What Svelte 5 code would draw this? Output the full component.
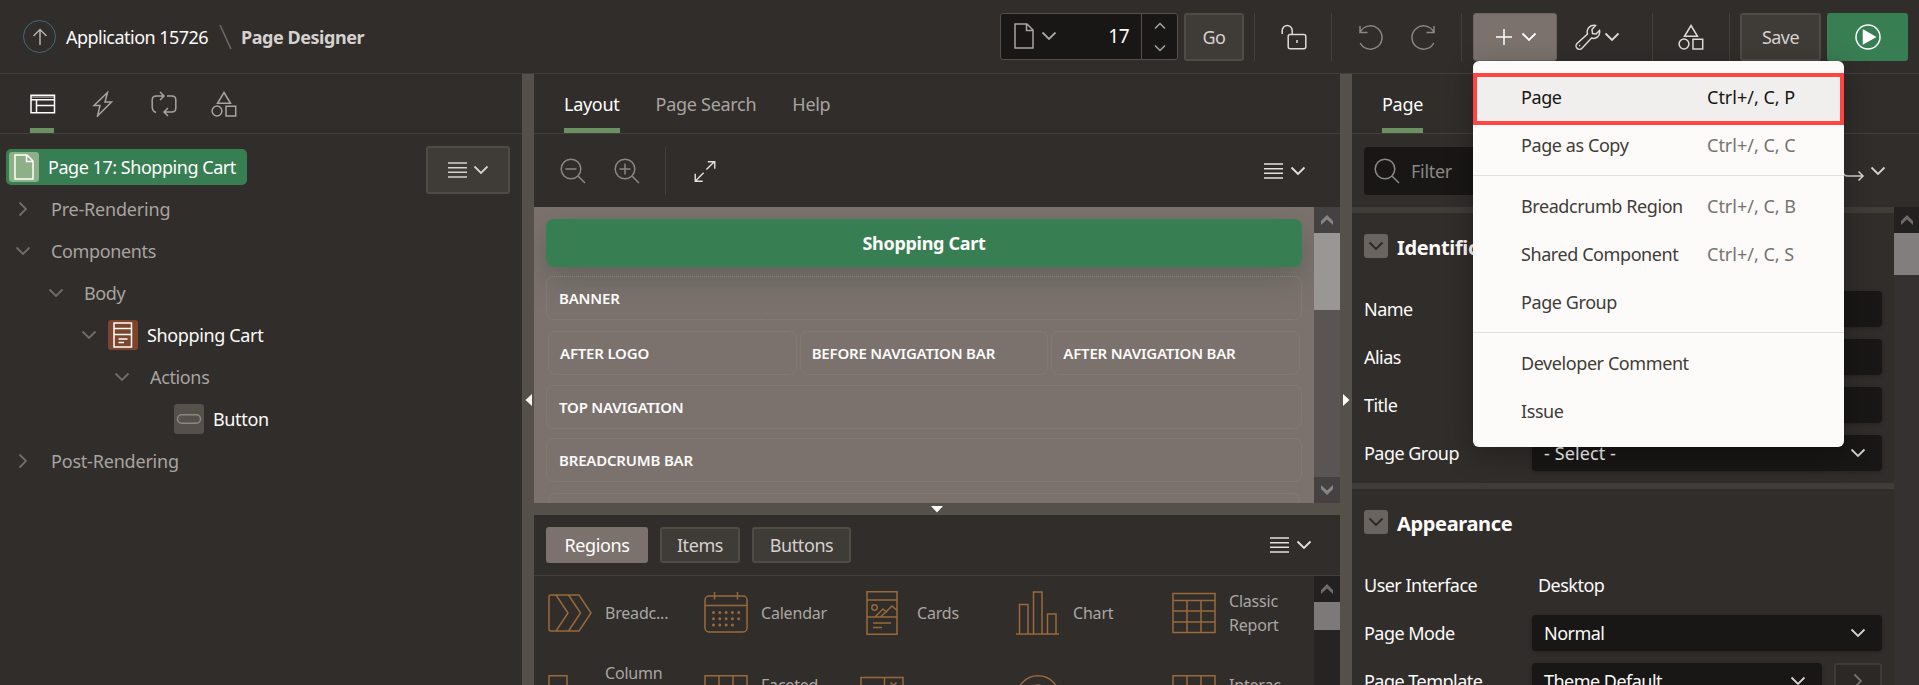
<script>
  const tree = [
    { label: 'Pre-Rendering', pad: 15, open: false, wide: true },
    { label: 'Components', pad: 15, open: true },
    { label: 'Body', pad: 48, open: true },
    { label: 'Shopping Cart', pad: 81, open: true, icon: 'region' },
    { label: 'Actions', pad: 114, open: true },
    { label: 'Button', pad: 147, icon: 'button' },
    { label: 'Post-Rendering', pad: 15, open: false, wide: true }
  ];
  const gallery = [
    ['Breadc...', 'crumb'], ['Calendar', 'calendar'], ['Cards', 'cards'], ['Chart', 'chart'], ['Classic Report', 'report'],
    ['Column Toggle Report', 'column'], ['Faceted Search', 'grid'], ['Form', 'form'], ['Help Text', 'help'], ['Interac… Grid', 'grid']
  ];
  const menu = [
    [['Page', 'Ctrl+/, C, P'], ['Page as Copy', 'Ctrl+/, C, C']],
    [['Breadcrumb Region', 'Ctrl+/, C, B'], ['Shared Component', 'Ctrl+/, C, S'], ['Page Group', '']],
    [['Developer Comment', ''], ['Issue', '']]
  ];
</script>

{#snippet chev(dir = 'open')}
  <svg class="chev {dir}" width="16" height="16" viewBox="0 0 16 16"><path d="M1.5 4.5 8 11l6.5-6.5" /></svg>
{/snippet}

{#snippet icon(name)}
  {#if name === 'lines'}
    <svg class="ic" width="19" height="18" viewBox="0 0 19 18"><path d="M0 2h19M0 6.7h19M0 11.3h19M0 16h19" /></svg>
  {:else if name === 'file'}
    <svg class="ic" width="20" height="26" viewBox="0 0 20 26"><path d="M1 1h12l6 6v18H1zM12.5 1v6.5H19" /></svg>
  {:else}
    <svg class="ic" width="26" height="26" viewBox="0 0 26 26">
      {#if name === 'tree'}
        <path d="M1 4.2h23.5v17.6H1zM1 8.7h23.5M6.5 9v12.5M6.5 14.5h18" /><path d="M1 6h23" class="faint" />
      {:else if name === 'bolt'}
        <path d="M16.5 1.5 3 14.500h6l-2.500 10.500L20.500 11h-6.500z" />
      {:else if name === 'sync'}
        <path d="M5 21.5Q1.2 20 1.2 16V9q0-4 4-4H12M9 1l4 4-4 4M16 5h4.8q4 0 4 4v8q0 4-4 4H14M17 25l-4-4 4-4" />
      {:else if name === 'shapes'}
        <path d="m13 1.5 6.5 10.8h-13zM15 15.3h9.7V25H15z" /><circle cx="6" cy="20" r="4.9" />
      {:else if name === 'lock'}
        <path d="M1.2 10V6.5a5 5 0 0 1 10 0V10" /><rect x="7.2" y="10.5" width="17.6" height="14.3" rx="2" /><path d="M16 16v3" />
      {:else if name === 'undo' || name === 'redo'}
        <g class={name}><path d="M2 2v6.500h7.500M2.200 8A11.600 11.600 0 1 1 2.200 19" /></g>
      {:else if name === 'wrench'}
        <path d="M2 19.5 12.5 10C11 5 15 .5 20.5 1.5L17 5.5l.5 4 3.5.5 3.5-3.5C25.500 12 21 15.500 16.500 14L7 24.200a3.300 3.300 0 0 1-5-4.700z" />
        <path d="M4 21.500h1.200" />
      {:else if name === 'run'}
        <circle cx="13" cy="13" r="12" /><path class="solid" d="M8.500 6.500 20 13 8.500 19.500z" />
      {:else if name === 'search' || name === 'zoomout' || name === 'zoomin'}
        <circle cx="11" cy="11" r="9.800" /><path d="m18 18 7 7" />
        {#if name !== 'search'}<path d="M5.500 11h11" />{/if}
        {#if name === 'zoomin'}<path d="M11 5.500v11" />{/if}
      {:else if name === 'expand'}
        <path d="M14.500 11.500 23 3M16 3h7.500v7.500M11.500 15 3 23.500M2.500 16v8H10.500" />
      {:else if name === 'plus'}
        <path d="M13 5v16M5 13h16" />
      {:else if name === 'goto'}
        <path d="M4 0v13q0 5 5 5h15M19.500 13.500 24 18l-4.500 4.500" />
      {:else if name === 'region'}
        <path d="M4 1h17.500v24H4zM4 6.500h17.500M4 12.500h17.500M8.500 17h9M8.500 20.500h5.500" />
      {:else if name === 'button'}
        <rect x="1.500" y="8.800" width="23" height="8.500" rx="4.200" />
      {/if}
    </svg>
  {/if}
{/snippet}

{#snippet art(name)}
  <svg class="art" width="44" height="44" viewBox="0 0 44 44">
    {#if name === 'crumb'}
      <path d="M3 4h28l12 18-12 18H3q-2 0-2-2V6q0-2 2-2zM8 4l12 18L8 40M20.500 4l12 18-12 18" />
    {:else if name === 'calendar'}
      <rect x="1" y="5" width="42" height="36" rx="4" /><path d="M1 14.500h42M10.500 1v7.500M33.500 1v7.500" />
      <path class="dots" d="M9.500 21.500h28M9.500 27.700h28M9.500 34h22" />
    {:else if name === 'cards'}
      <path d="M7 .8h30v42.400H7zM7 9h30M7 26h30M13 32h18M13 36.500h9M15.500 25.500 23 18l4 3.500M21 25.500 32 15l5 4.500" /><circle cx="14.500" cy="16.500" r="2.700" />
    {:else if name === 'chart'}
      <path d="M0 43h43M3.500 43V13.500h8.500V43M17.500 43V1H26v42M31.500 43V23H40v20" />
    {:else if name === 'report'}
      <path d="M1 2.500h42v39H1zM1 9.500h42M1 20h42M1 31h42M15 9.500v32M29 9.500v32" />
    {:else if name === 'column'}
      <path d="M1 .8h18v42.400H1zM26 12h17v31H26" />
    {:else if name === 'grid'}
      <path d="M1 .8h42v42.400H1zM1 15h42M1 29h42M15 1v42M29 1v42" />
    {:else if name === 'form'}
      <path d="M1 2.500h42v15H1zM24.500 2.500v15M30.500 7.500l6 6M36.500 7.500l-6 6" />
    {:else if name === 'help'}
      <circle cx="22" cy="22" r="21.200" /><path d="M16 17q0-7 6-7t6 7q0 4-6 6v6" />
    {/if}
  </svg>
{/snippet}

{#snippet sbtn(dir)}
  <div class="sbtn"><svg width="14" height="12" viewBox="0 0 14 12" class={dir}><path d="M7 1 13 7v4L7 5.500 1 11V7z" /></svg></div>
{/snippet}

<div class="app">
  <header>
    <div class="home"><svg width="18" height="18" viewBox="0 0 18 18"><path d="M9 17V2M2.500 8 9 1.500 15.500 8" /></svg></div>
    <span class="appname">Application 15726</span>
    <svg class="slash" width="13" height="24" viewBox="0 0 13 24"><path d="M1 0 12 24" /></svg>
    <b class="title">Page Designer</b>
    <div class="bar">
      <div class="pagebox">
        <span class="pf">{@render icon('file')}{@render chev()}</span><span class="num">17</span>
        <span class="spin"><svg width="12" height="8" viewBox="0 0 12 8"><path d="m1 6.500 5-5 5 5" /></svg><svg width="12" height="8" viewBox="0 0 12 8"><path d="m1 1.500 5 5 5-5" /></svg></span>
      </div>
      <button class="btn go">Go</button>
      <i class="vs s1"></i>
      <span class="tool lock">{@render icon('lock')}</span>
      <i class="vs s2"></i>
      <span class="tool undo-t">{@render icon('undo')}</span>
      <span class="tool redo-t">{@render icon('redo')}</span>
      <i class="vs s3"></i>
      <button class="btn add">{@render icon('plus')}{@render chev()}</button>
      <span class="tool wr">{@render icon('wrench')}{@render chev()}</span>
      <i class="vs s4"></i>
      <span class="tool sh">{@render icon('shapes')}</span>
      <i class="vs s5"></i>
      <button class="btn save">Save</button>
      <button class="btn run">{@render icon('run')}</button>
    </div>
  </header>

  <main>
    <section class="left">
      <nav class="tabs icons">
        <span class="on">{@render icon('tree')}</span><span>{@render icon('bolt')}</span><span>{@render icon('sync')}</span><span>{@render icon('shapes')}</span>
      </nav>
      <div class="treewrap">
        <div class="root"><span class="tile">{@render icon('file')}</span><span>Page 17: Shopping Cart</span></div>
        <button class="btn treemenu">{@render icon('lines')}{@render chev()}</button>
      </div>
      {#each tree as n}
        <div class="node" class:strong={n.icon} class:wide={n.wide} style="padding-left:{n.pad}px">
          <span class="tw">{#if n.open !== undefined}{@render chev(n.open ? 'open' : 'closed')}{/if}</span>
          {#if n.icon}<span class="tile {n.icon}">{@render icon(n.icon)}</span>{/if}
          <span class="lbl">{n.label}</span>
        </div>
      {/each}
    </section>

    <div class="split"><svg width="7" height="12" viewBox="0 0 7 12"><path d="M7 0v12L.5 6z" /></svg></div>

    <section class="mid">
      <nav class="tabs"><span class="on">Layout</span><span>Page Search</span><span>Help</span></nav>
      <div class="ltools">
        <span class="dim">{@render icon('zoomout')}</span><span class="dim">{@render icon('zoomin')}</span><i class="vs"></i>
        <span class="exp">{@render icon('expand')}</span>
        <span class="mm">{@render icon('lines')}{@render chev()}</span>
      </div>
      <div class="canvas">
        <div class="slots">
          <div class="cart">Shopping Cart</div>
          <div class="slot banner">BANNER</div>
          <div class="trio"><div class="slot">AFTER LOGO</div><div class="slot">BEFORE NAVIGATION BAR</div><div class="slot">AFTER NAVIGATION BAR</div></div>
          <div class="slot topnav">TOP NAVIGATION</div>
          <div class="slot bread">BREADCRUMB BAR</div>
          <div class="slot more"></div>
        </div>
        <div class="sbar light">{@render sbtn('asc')}<div class="thumb"></div><div class="grow"></div>{@render sbtn('desc')}</div>
      </div>
      <div class="hsplit"><svg width="12" height="7" viewBox="0 0 12 7"><path d="M0 0h12L6 6.500z" /></svg></div>
      <div class="gtabs">
        <button class="btn sel">Regions</button><button class="btn it">Items</button><button class="btn bu">Buttons</button>
        <span class="mm">{@render icon('lines')}{@render chev()}</span>
      </div>
      <div class="gal">
        <div class="grid">
          {#each gallery as [label, name]}
            <div class="cell">{@render art(name)}<span>{label}</span></div>
          {/each}
        </div>
        <div class="sbar">{@render sbtn('asc')}<div class="thumb"></div></div>
      </div>
    </section>

    <div class="split"><svg width="7" height="12" viewBox="0 0 7 12"><path d="M0 0v12L6.500 6z" /></svg></div>

    <section class="inspector">
      <nav class="tabs"><span class="on">Page</span></nav>
      <div class="frow"><div class="filter">{@render icon('search')}<span>Filter</span></div><span class="goto">{@render icon('goto')}{@render chev()}</span></div>
      <div class="props">
        <div class="plist">
          <h3><span class="tog">{@render chev()}</span>Identification</h3>
          <div class="prow"><label for="p-name">Name</label><div class="field" id="p-name"></div></div>
          <div class="prow"><label for="p-alias">Alias</label><div class="field" id="p-alias"></div></div>
          <div class="prow"><label for="p-title">Title</label><div class="field" id="p-title"></div></div>
          <div class="prow"><label for="p-group">Page Group</label><div class="field" id="p-group"><span class="loose">- Select -</span>{@render chev()}</div></div>
          <h3 class="second"><span class="tog">{@render chev()}</span>Appearance</h3>
          <div class="prow"><label for="p-ui">User Interface</label><div class="plain" id="p-ui">Desktop</div></div>
          <div class="prow"><label for="p-mode">Page Mode</label><div class="field" id="p-mode"><span>Normal</span>{@render chev()}</div></div>
          <div class="prow"><label for="p-tpl">Page Template</label><div class="field" id="p-tpl"><span>Theme Default</span>{@render chev()}</div><button class="nav">{@render chev('closed')}</button></div>
        </div>
        <div class="sbar pane">{@render sbtn('asc')}<div class="thumb"></div></div>
      </div>
    </section>
  </main>

  <div class="menu">
    {#each menu as group, g}
      {#if g}<hr />{/if}
      {#each group as [label, keys], i}
        <div class="mi" class:first={!g && !i}><span>{label}</span><span class="keys">{keys}</span></div>
      {/each}
    {/each}
    <div class="mark"></div>
  </div>
</div>

<style>
  :global(body) { overflow: hidden; background: #312d2a; }
  .app { position: relative; width: 1919px; height: 685px; overflow: hidden; background: #312d2a; color: #fcfbfa; font: 18px/24px "Noto Sans", "Open Sans", sans-serif; letter-spacing: -0.52px; white-space: nowrap; }
  .app :global(*) { box-sizing: border-box; }
  svg { display: block; flex: none; fill: none; stroke: currentColor; stroke-width: 1.5; }
  .chev { stroke-width: 1.8; }
  .chev.closed { transform: rotate(-90deg); }
  .faint { opacity: .5; }
  .solid { fill: currentColor; }
  .redo { transform: translateX(26px) scaleX(-1); }
  button { font: inherit; letter-spacing: inherit; color: inherit; margin: 0; padding: 0; }

  header { height: 74px; border-bottom: 1px solid #443f3b; display: flex; align-items: center; padding-left: 23px; }
  .home { width: 33px; height: 33px; border: 1.500px solid #3f6c7a; border-radius: 50%; display: grid; place-items: center; color: #b5b1ad; margin-right: 10px; }
  .appname { width: 153px; }
  .slash { color: #6f6a65; margin-right: 9px; }
  .title { color: #d5d2cf; letter-spacing: -0.45px; }
  .bar { margin-left: auto; display: flex; align-items: flex-start; height: 48px; padding-right: 11px; }
  .pagebox { width: 178px; height: 47px; border: 1px solid #55504a; border-radius: 3px; background: #191715; display: flex; align-items: center; margin-right: 6px; }
  .pf { display: flex; align-items: center; gap: 7px; padding-left: 13px; color: #a8a4a0; }
  .num { margin-left: auto; padding-right: 12px; font-size: 19px; }
  .spin { width: 36px; height: 100%; border-left: 1px solid #55504a; display: flex; flex-direction: column; align-items: center; justify-content: space-between; padding: 8px 0 7px; color: #a8a4a0; }
  .btn { display: flex; align-items: center; justify-content: center; height: 48px; border: 2px solid #504b45; border-radius: 3px; background: #3f3b36; color: #d5d2cf; }
  .go { width: 60px; }
  .vs { width: 1px; height: 48px; background: #45403c; flex: none; }
  .tool { height: 48px; display: flex; align-items: center; color: #dedbd8; gap: 3px; }
  .s1 { margin-left: 10px; } .lock { margin-left: 26px; } .s2 { margin-left: 24px; }
  .undo-t, .redo-t { color: #8b8784; } .undo-t { margin-left: 26px; } .redo-t { margin-left: 26px; } .s3 { margin-left: 25px; }
  .add { width: 84px; margin-left: 11px; background: #7b726d; border: 1px solid #6c645f; color: #fff; gap: 4px; padding-right: 2px; }
  .wr { margin-left: 18px; } .s4 { margin-left: 32px; } .sh { margin-left: 25px; } .s5 { margin-left: 25px; }
  .save { width: 81px; margin-left: 10px; }
  .run { width: 81px; margin-left: 6px; background: #387e53; border: 0; color: #fff; }

  main { display: flex; height: 611px; }
  section { flex: none; height: 100%; overflow: hidden; }
  .left { width: 522px; }
  .tabs { height: 60px; border-bottom: 1px solid #443f3b; display: flex; gap: 36px; padding-left: 30px; color: #a8a4a0; letter-spacing: -0.28px; }
  .tabs span { display: flex; align-items: center; height: 59px; padding-top: 1px; }
  .tabs .on { color: #fff; border-bottom: 5px solid #6b9163; padding-top: 6px; }
  .icons { gap: 0; }
  .icons span { width: 26px; margin-right: 34px; }
  .icons .on { width: 24px; margin-right: 37px; }
  .treewrap { display: flex; justify-content: space-between; padding: 12px 12px 0 6px; height: 54px; }
  .root { margin-top: 3px; width: 241px; height: 36px; border-radius: 5px; background: #387e53; display: flex; align-items: center; gap: 9px; padding-left: 3px; color: #fff; letter-spacing: -0.46px; }
  .tile { width: 30px; height: 30px; border-radius: 3px; background: #8db087; display: grid; place-items: center; color: #fff; flex: none; }
  .tile.region { background: #7d452b; margin-left: 11px; }
  .tile.button { background: #55504a; color: #8b8784; margin-left: 11px; }
  .treemenu { width: 84px; gap: 6px; }
  .node { height: 42px; display: flex; align-items: center; color: #a8a4a0; letter-spacing: -0.36px; }
  .node.wide { letter-spacing: -0.2px; }
  .tw { width: 16px; color: #726d69; }
  .lbl { margin-left: 20px; }
  .strong { color: #fcfbfa; }
  .strong .lbl { margin-left: 9px; }

  .split { width: 12px; flex: none; background: #55504a; display: flex; justify-content: center; padding-top: 320px; }
  .split path, .hsplit path { fill: #fcfbfa; stroke: none; }
  .mid { width: 806px; display: flex; flex-direction: column; }
  .ltools { height: 73px; flex: none; display: flex; align-items: center; padding-left: 26px; color: #e4e1dd; }
  .mid > .tabs { flex: none; }
  .dim { color: #8b8784; margin-right: 28px; }
  .ltools .vs { margin: 0 26px 0 -3px; }
  .mm { margin-left: auto; display: flex; align-items: center; gap: 7px; padding-right: 34px; color: #e4e1dd; }
  .ltools .exp { transform: scale(.93); }
  .canvas { height: 296px; flex: none; display: flex; }
  .slots { width: 780px; background: #7b726d; padding: 12px; overflow: hidden; font-size: 15px; font-weight: 600; letter-spacing: -0.2px; }
  .cart { height: 48px; border-radius: 8px; background: #387e53; display: grid; place-items: center; font-size: 18px; font-weight: 700; letter-spacing: -0.3px; box-shadow: 0 12px 28px rgba(80, 84, 78, .5); margin-bottom: 9px; }
  .slot { height: 44px; border: 1px dotted #88817b; border-radius: 8px; padding-left: 12px; display: flex; align-items: center; }
  .trio { display: grid; grid-template-columns: repeat(3, 1fr); gap: 3px; padding: 0 2px; margin: 11px 0 10px; }
  .trio .slot { padding-left: 11px; }
  .topnav { margin-bottom: 9px; }
  .more { margin: 11px 2px 0; }
  .sbar { width: 26px; background: #252423; display: flex; flex-direction: column; flex: none; }
  .sbtn { height: 26px; flex: none; display: grid; place-items: center; background: #232020; color: #6e6a69; }
  .sbtn path { fill: currentColor; stroke: none; }
  .desc { transform: scaleY(-1); }
  .sbar .thumb { height: 28px; background: #7d7978; }
  .sbar.light { background: #5a5553; }
  .light .sbtn { background: #454140; color: #888482; }
  .light .thumb { height: 77px; background: #9a9694; }
  .grow { flex: 1; }
  .hsplit { height: 12px; background: #55504a; display: flex; justify-content: center; padding-top: 3px; flex: none; }
  .gtabs { height: 61px; flex: none; border-bottom: 1px solid #443f3b; display: flex; align-items: center; gap: 12px; padding-left: 12px; letter-spacing: -0.4px; }
  .gtabs .btn { height: 36px; }
  .gtabs .sel { width: 102px; background: #7b726d; border-color: #7b726d; color: #fff; }
  .it { width: 80px; } .bu { width: 99px; }
  .gtabs .mm { padding-right: 28px; }
  .gal { flex: 1; display: flex; overflow: hidden; }
  .grid { width: 780px; height: 168px; display: grid; grid-template-columns: repeat(5, 156px); grid-template-rows: 74px 94px; color: #aaa6a2; font-size: 16px; letter-spacing: -0.2px; }
  .cell { display: flex; align-items: center; padding-left: 14px; gap: 13px; }
  .cell span { white-space: normal; width: 70px; }
  .art { color: #98693a; stroke-width: 1.5; }
  .dots { stroke-width: 3; stroke-dasharray: 0 6.300; stroke-linecap: round; }

  .inspector { width: 567px; }
  .frow { height: 73px; display: flex; align-items: center; justify-content: space-between; padding: 0 33px 0 12px; }
  .filter { width: 400px; height: 48px; background: #191715; border-radius: 4px; display: flex; align-items: center; gap: 11px; padding-left: 10px; color: #8b8784; letter-spacing: -0.3px; }
  .goto { display: flex; align-items: center; color: #d5d2cf; gap: 5px; }
  .goto .chev { margin-top: 1px; }
  .props { display: flex; height: 478px; }
  .plist { width: 542px; border-top: 6px solid #403c38; }
  .pane { width: 25px; background: #353130; }
  .pane .thumb { height: 42px; background: #827e7d; }
  h3 { margin: 0; height: 78px; display: flex; align-items: flex-start; padding: 21px 0 0 12px; font-size: 20px; line-height: 27px; gap: 9px; letter-spacing: -0.35px; }
  .second { border-top: 6px solid #403c38; }
  .plist h3.second { height: 84px; }
  .tog { width: 24px; height: 24px; border-radius: 3px; background: #69645f; color: #292624; display: grid; place-items: center; }
  .prow { display: flex; height: 36px; margin: 0 12px 12px; align-items: center; }
  label { width: 168px; flex: none; }
  .field { flex: 1; height: 36px; background: #191715; border-radius: 4px; display: flex; align-items: center; justify-content: space-between; padding: 0 16px 0 12px; box-shadow: 0 1px 4px rgba(0, 0, 0, .25); }
  .field .chev { color: #d5d2cf; }
  .loose { letter-spacing: .1px; }
  .plain { padding-left: 6px; }
  .nav { width: 48px; height: 36px; margin-left: 12px; border: 2px solid #3f3b37; border-radius: 3px; background: #2c2826; color: #77726e; display: grid; place-items: center; }

  .menu { position: absolute; left: 1473px; top: 61px; width: 371px; height: 386px; padding: 12px 0; background: #fcfbfa; border-radius: 6px; color: #403c38; box-shadow: 0 8px 28px rgba(0, 0, 0, .3); letter-spacing: -0.42px; }
  .mi { height: 48px; display: flex; align-items: center; justify-content: space-between; padding: 0 46px 0 48px; }
  .first { background: #f1efed; color: #161513; }
  .keys { color: #77736f; width: 91px; letter-spacing: 0; }
  .first .keys { color: #161513; }
  hr { margin: 6px 0; height: 1px; border: 0; background: #e2e0dd; }
  .mark { position: absolute; left: 0; top: 12px; width: 371px; height: 52px; border: 4px solid #fe4544; }
</style>
